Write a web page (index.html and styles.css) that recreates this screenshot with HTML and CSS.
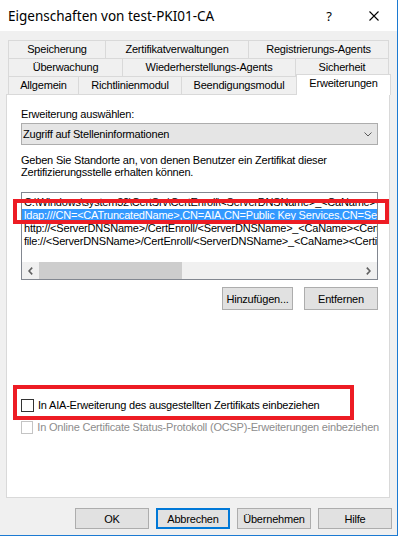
FILE: index.html
```html
<!DOCTYPE html>
<html lang="de">
<head>
<meta charset="utf-8">
<title>Eigenschaften von test-PKI01-CA</title>
<link rel="stylesheet" href="styles.css">
</head>
<body>
<div class="window">
  <div class="titlebar">
    <span class="title">Eigenschaften von test-PKI01-CA</span>
    <span class="help">?</span>
    <svg class="close" width="10" height="10" viewBox="0 0 10 10"><path d="M0.5 0.5 L9.5 9.5 M9.5 0.5 L0.5 9.5" stroke="#000" stroke-width="1.1" fill="none"/></svg>
  </div>
  <div class="tabs">
    <div class="tabrow">
      <div class="tab t-speich">Speicherung</div>
      <div class="tab t-zert">Zertifikatverwaltungen</div>
      <div class="tab t-reg">Registrierungs-Agents</div>
    </div>
    <div class="tabrow">
      <div class="tab t-ueber">Überwachung</div>
      <div class="tab t-wieder">Wiederherstellungs-Agents</div>
      <div class="tab t-sich">Sicherheit</div>
    </div>
    <div class="tabrow">
      <div class="tab t-allg">Allgemein</div>
      <div class="tab t-richt">Richtlinienmodul</div>
      <div class="tab t-beend">Beendigungsmodul</div>
      <div class="tab active t-erw">Erweiterungen</div>
    </div>
  </div>
  <div class="panel">
    <div class="label">Erweiterung auswählen:</div>
    <div class="select">
      <span>Zugriff auf Stelleninformationen</span>
      <svg class="chev" width="8" height="5" viewBox="0 0 8 5"><path d="M0.5 0.5 L4 4 L7.5 0.5" stroke="#5a5a5a" stroke-width="1" fill="none"/></svg>
    </div>
    <p class="desc">Geben Sie Standorte an, von denen Benutzer ein Zertifikat dieser<br>Zertifizierungsstelle erhalten können.</p>
    <div class="listbox">
      <div class="items">
        <div class="item">C:\Windows\system32\CertSrv\CertEnroll\&lt;ServerDNSName&gt;_&lt;CaName&gt;&lt;CertificateName&gt;.crt</div>
        <div class="item selected">ldap:///CN=&lt;CATruncatedName&gt;,CN=AIA,CN=Public Key Services,CN=Services,&lt;ConfigurationContainer&gt;&lt;CAObjectClass&gt;</div>
        <div class="item">http://&lt;ServerDNSName&gt;/CertEnroll/&lt;ServerDNSName&gt;_&lt;CaName&gt;&lt;CertificateName&gt;.crt</div>
        <div class="item">file://&lt;ServerDNSName&gt;/CertEnroll/&lt;ServerDNSName&gt;_&lt;CaName&gt;&lt;CertificateName&gt;.crt</div>
      </div>
      <div class="hscroll">
        <div class="arrow"><svg width="5" height="8" viewBox="0 0 5 8"><path d="M4.2 0.6 L1 4 L4.2 7.4" stroke="#606060" stroke-width="1.6" fill="none"/></svg></div>
        <div class="track"><div class="thumb"></div></div>
        <div class="arrow"><svg width="5" height="8" viewBox="0 0 5 8"><path d="M0.8 0.6 L4 4 L0.8 7.4" stroke="#606060" stroke-width="1.6" fill="none"/></svg></div>
      </div>
    </div>
    <div class="listbtns">
      <button class="btn b-add">Hinzufügen...</button>
      <button class="btn b-del">Entfernen</button>
    </div>
    <div class="check"><span class="box"></span><span>In AIA-Erweiterung des ausgestellten Zertifikats einbeziehen</span></div>
    <div class="check disabled"><span class="box"></span><span>In Online Certificate Status-Protokoll (OCSP)-Erweiterungen einbeziehen</span></div>
  </div>
  <div class="footer">
    <button class="btn fbtn">OK</button>
    <button class="btn fbtn focus">Abbrechen</button>
    <button class="btn fbtn">Übernehmen</button>
    <button class="btn fbtn">Hilfe</button>
  </div>
  <div class="redbox rb1"></div>
  <div class="redbox rb2"></div>
</div>
</body>
</html>
```
FILE: styles.css
```css
* { box-sizing: border-box; }
html, body { margin: 0; padding: 0; background: #fff; }
.window {
  position: relative;
  width: 398px;
  height: 536px;
  background: #f0f0f0;
  border-right: 1px solid #1c7ad2;
  border-bottom: 1px solid #1c7ad2;
  font-family: "Liberation Sans", Arial, sans-serif;
  font-size: 11px;
  letter-spacing: -0.2px;
  color: #000;
}
.titlebar {
  height: 31px;
  background: #fff;
  display: flex;
  align-items: center;
  font-family: "Noto Sans", sans-serif;
  font-size: 13.5px;
  letter-spacing: 0;
}
.title { margin-left: 8px; flex: 1; }
.help { width: 8px; text-align: center; margin-right: 36px; font-size: 13px; }
.close { margin-right: 18px; }

.tabs { padding-top: 9px; padding-left: 8px; }
.tabrow { display: flex; height: 18px; }
.tab {
  height: 18px;
  border: 1px solid #d9d9d9;
  border-bottom: none;
  margin-left: -1px;
  text-align: center;
  line-height: 17px;
  white-space: nowrap;
}
.tab:first-child { margin-left: 0; }
.t-speich { width: 98px; }
.t-zert { width: 144px; }
.t-reg { width: 141px; }
.t-ueber { width: 115px; }
.t-wieder { width: 174px; }
.t-sich { width: 94px; }
.t-allg { width: 71px; }
.t-richt { width: 104px; }
.t-beend { width: 116px; }
.tab.active {
  width: 95px;
  height: 21px;
  margin-top: -2px;
  background: #fff;
  position: relative;
  z-index: 2;
}

.panel {
  margin-left: 6px;
  width: 384px;
  height: 404px;
  background: #fff;
  border: 1px solid #d9d9d9;
  padding: 0 10px 0 14px;
}
.label { margin-top: 13px; line-height: 13px; }
.select {
  margin-top: 2px;
  height: 22px;
  width: 357px;
  background: #e5e5e5;
  border: 1px solid #adadad;
  display: flex;
  align-items: center;
  justify-content: space-between;
  padding: 0 5px 0 1px;
}
.chev { margin-top: 1px; }
.desc { margin: 9px 0 0 0; line-height: 12px; }
.listbox {
  margin-top: 14px;
  width: 357px;
  height: 88px;
  border: 1px solid #828790;
  display: flex;
  flex-direction: column;
}
.items { flex: 1; overflow: hidden; padding-top: 3px; }
.item { height: 13px; line-height: 13px; padding-left: 2px; white-space: nowrap; }
.item.selected { background: #3399ff; color: #fff; }
.hscroll { height: 17px; display: flex; background: #f0f0f0; }
.arrow { width: 17px; display: flex; align-items: center; justify-content: center; }
.track { flex: 1; display: flex; align-items: stretch; padding: 0; }
.thumb { width: 143px; background: #cdcdcd; }

.btn {
  font-family: "Liberation Sans", Arial, sans-serif;
  font-size: 11px;
  letter-spacing: -0.2px;
  color: #000;
  background: #e1e1e1;
  border: 1px solid #adadad;
  padding: 0;
  margin: 0;
}
.listbtns { display: flex; justify-content: flex-end; gap: 11px; margin-top: 7px; width: 357px; }
.listbtns .btn { height: 23px; }
.b-add { width: 71px; }
.b-del { width: 74px; }

.check { display: flex; align-items: center; height: 13px; line-height: 13px; white-space: nowrap; }
.check .box { width: 13px; height: 13px; border: 1px solid #333; background: #fff; margin-right: 4px; }
.listbtns + .check { margin-top: 89px; }
.check + .check { margin-top: 9px; }
.check.disabled { color: #8d8d8d; }
.check.disabled .box { border-color: #c4c4c4; }

.footer { display: flex; gap: 7px; padding-left: 75px; margin-top: 10px; }
.fbtn { width: 74px; height: 21px; }
.fbtn.focus { border: 2px solid #0078d7; }

.redbox { position: absolute; border: 4px solid #ed1c24; }
.rb1 { left: 13px; top: 199px; width: 376px; height: 25px; }
.rb2 { left: 13px; top: 385px; width: 341px; height: 35px; }
```
